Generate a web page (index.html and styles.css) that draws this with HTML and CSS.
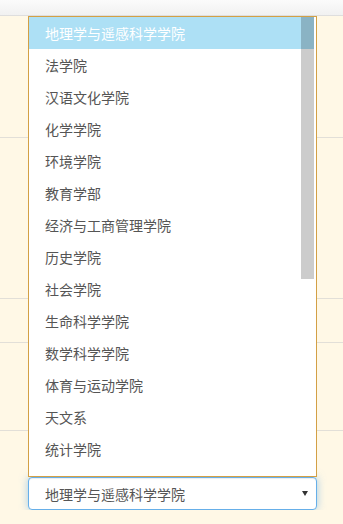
FILE: index.html
```
<!DOCTYPE html>
<html lang="zh-CN">
  <head>
    <meta charset="UTF-8" />
    <title>选择学院</title>
    <link rel="stylesheet" href="styles.css">
  </head>

  <body>
    <div class="topbar"></div>
    <div class="form">
      <div class="row row-a"></div>
      <div class="row row-b"></div>
      <div class="row row-c"></div>
      <div class="row row-d"></div>
      <div class="row-last">
        <div class="picker">
          <div class="options">
            <ul>
              <li class="current">地理学与遥感科学学院</li>
              <li>法学院</li>
              <li>汉语文化学院</li>
              <li>化学学院</li>
              <li>环境学院</li>
              <li>教育学部</li>
              <li>经济与工商管理学院</li>
              <li>历史学院</li>
              <li>社会学院</li>
              <li>生命科学学院</li>
              <li>数学科学学院</li>
              <li>体育与运动学院</li>
              <li>天文系</li>
              <li>统计学院</li>
            </ul>
            <div class="thumb"></div>
          </div>
          <div class="select">
            <span>地理学与遥感科学学院</span>
            <i class="caret"></i>
          </div>
        </div>
      </div>
    </div>
  </body>
</html>
```

FILE: styles.css
```
* {
  padding: 0;
  margin: 0;
  list-style: none;
  box-sizing: border-box;
}

body {
  background: #fff8e6;
  font-family: "Noto Sans CJK SC", "Noto Sans", sans-serif;
  font-size: 14px;
  color: #555;
}

.topbar {
  height: 16px;
  background: linear-gradient(#fbfbfb, #f1f1f1);
  border-bottom: 1px solid #dedede;
}

.row {
  border-bottom: 1px solid #e2dfd8;
}

.row-a {
  height: 122px;
}

.row-b {
  height: 161px;
}

.row-c {
  height: 44px;
}

.row-d {
  height: 88px;
}

.row-last {
  padding: 46px 0 0 28px;
}

.picker {
  position: relative;
  width: 289px;
}

.options {
  position: absolute;
  left: 0;
  bottom: 100%;
  width: 100%;
  height: 461px;
  background: #fff;
  border: 1px solid #d3a045;
  padding-right: 2px;
  overflow: hidden;
}

.options li {
  height: 32px;
  line-height: 32px;
  padding-left: 16px;
  white-space: nowrap;
}

.options li.current {
  background: #ade0f5;
  color: #fff;
}

.thumb {
  position: absolute;
  top: 0;
  right: 2px;
  width: 13px;
  height: 262px;
  background: rgba(0, 0, 0, 0.2);
}

.select {
  display: flex;
  align-items: center;
  justify-content: space-between;
  height: 33px;
  padding: 0 8px 0 16px;
  background: #fff;
  border: 1px solid #66afe9;
  border-radius: 4px;
  box-shadow: 0 0 8px rgba(102, 175, 233, 0.6), inset 0 1px 1px rgba(0, 0, 0, 0.075);
}

.caret {
  width: 0;
  height: 0;
  border-left: 3px solid transparent;
  border-right: 3px solid transparent;
  border-top: 5px solid #333;
}
```
